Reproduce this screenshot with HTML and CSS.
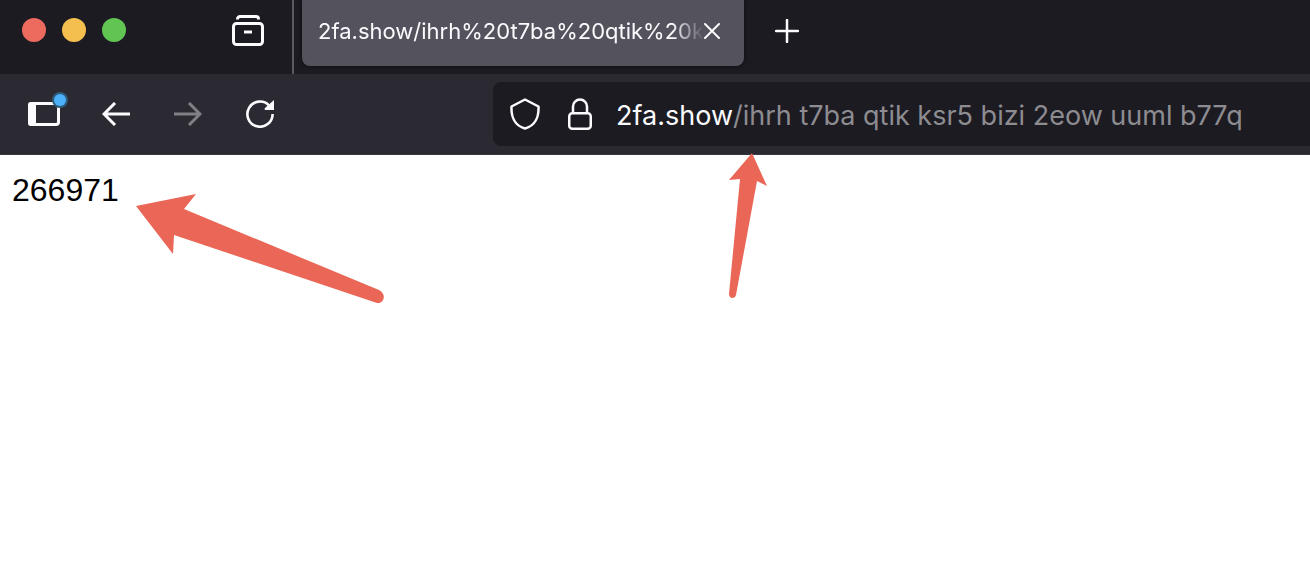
FILE: index.html
```html
<!DOCTYPE html>
<html lang="en">
<head>
    <meta charset="UTF-8">
    <meta name="viewport" content="width=device-width, initial-scale=1.0">
    <title>2fa.show</title>
    <link rel="stylesheet" href="styles.css">
</head>
<body>
    <header class="tab-strip">
        <div class="window-buttons">
            <button class="dot dot-close" aria-label="Close window"></button>
            <button class="dot dot-min" aria-label="Minimize window"></button>
            <button class="dot dot-max" aria-label="Zoom window"></button>
        </div>
        <button class="icon-btn recent-btn" aria-label="Recent browsing">
            <svg width="32" height="32" viewBox="0 0 32 32" fill="none" stroke="#fbfbfe" stroke-width="3">
                <path d="M5.500 4.500V4a2.500 2.500 0 0 1 2.500-2.500h16A2.500 2.500 0 0 1 26.500 4v.5"/>
                <rect x="1.500" y="8.500" width="29" height="21" rx="3"/>
                <path d="M12 17h8"/>
            </svg>
        </button>
        <div class="tab">
            <span class="tab-title">2fa.show/ihrh%20t7ba%20qtik%20k</span>
            <button class="icon-btn tab-close" aria-label="Close tab">
                <svg width="16" height="16" viewBox="0 0 16 16" stroke="#fbfbfe" stroke-width="2" stroke-linecap="round">
                    <path d="M1 1l14 14M15 1L1 15"/>
                </svg>
            </button>
        </div>
        <button class="icon-btn new-tab" aria-label="New tab">
            <svg width="24" height="24" viewBox="0 0 24 24" stroke="#fbfbfe" stroke-width="2.500" stroke-linecap="round">
                <path d="M12 1v22M1 12h22"/>
            </svg>
        </button>
    </header>

    <nav class="toolbar">
        <div class="nav-buttons">
            <button class="icon-btn sidebar-btn" aria-label="Sidebar">
                <svg width="32" height="24" viewBox="0 0 32 24">
                    <rect x="1.500" y="1.500" width="29" height="21" rx="2.500" fill="none" stroke="#fbfbfe" stroke-width="3"/>
                    <path d="M3 0h5v24H3a3 3 0 0 1-3-3V3a3 3 0 0 1 3-3z" fill="#fbfbfe"/>
                </svg>
                <span class="badge"></span>
            </button>
            <button class="icon-btn" aria-label="Back">
                <svg width="28" height="24" viewBox="0 0 28 24" fill="none" stroke="#fbfbfe" stroke-width="3">
                    <path d="M28 12H2M13 1L2 12l11 11"/>
                </svg>
            </button>
            <button class="icon-btn" aria-label="Forward" disabled>
                <svg width="28" height="24" viewBox="0 0 28 24" fill="none" stroke="#807f86" stroke-width="3">
                    <path d="M0 12h26M15 1l11 11-11 11"/>
                </svg>
            </button>
            <button class="icon-btn" aria-label="Reload">
                <svg width="28" height="28" viewBox="0 0 28 28">
                    <path d="M23 5.300A12.600 12.600 0 1 0 26.600 14" fill="none" stroke="#fbfbfe" stroke-width="2.600"/>
                    <path d="M28 0v10h-9q-1-1 0-2z" fill="#fbfbfe"/>
                </svg>
            </button>
        </div>
        <div class="url-bar">
            <svg width="30" height="32" viewBox="0 0 30 32" fill="none" stroke="#fbfbfe" stroke-width="2.500" stroke-linejoin="round">
                <path d="M15 1.500L28.500 8.500C29 19 25 28 15 30.500 5 28 1 19 1.500 8.500z"/>
            </svg>
            <svg width="24" height="32" viewBox="0 0 24 32" fill="none" stroke="#fbfbfe" stroke-width="2.500">
                <rect x="1.250" y="15.250" width="21.500" height="15.500" rx="3"/>
                <path d="M5 15V8.500a7 7 0 0 1 14 0V15"/>
            </svg>
            <div class="address">
                <label for="url">2fa.show</label>
                <input type="text" id="url" value="/ihrh t7ba qtik ksr5 bizi 2eow uuml b77q" spellcheck="false">
            </div>
        </div>
    </nav>

    <main class="page">
        <p class="code">266971</p>
        <svg class="arrow arrow-code" width="250" height="112" viewBox="0 0 250 112" fill="#ea6656">
            <path d="M0 12L60 0 48 15 243 96C251 100 248 110 241 109L38 41 37 60z"/>
        </svg>
        <svg class="arrow arrow-url" width="40" height="146" viewBox="0 0 40 146" fill="#ea6656">
            <path d="M24 0L39 33 29 28 8 142C7 146 1 146 1 141L12 26 1 27z"/>
        </svg>
    </main>
</body>
</html>
```
FILE: styles.css
```css
* {
    box-sizing: border-box;
}
body {
    display: flex;
    flex-direction: column;
    min-height: 100vh;
    margin: 0;
    background-color: #fff;
    font-family: Inter, sans-serif;
}
button {
    padding: 0;
    border: none;
    background: none;
}
svg {
    display: block;
    flex-shrink: 0;
}
.tab-strip {
    display: flex;
    height: 74px;
    background-color: #1c1b22;
    overflow: hidden;
}
.window-buttons {
    display: flex;
    gap: 16px;
    padding: 18px 0 0 22px;
}
.dot {
    width: 24px;
    height: 24px;
    border-radius: 50%;
}
.dot-close {
    background-color: #ed6a5e;
}
.dot-min {
    background-color: #f5bf4f;
}
.dot-max {
    background-color: #61c554;
}
.icon-btn {
    display: flex;
    align-items: center;
    justify-content: center;
    flex-shrink: 0;
}
.recent-btn {
    justify-content: flex-end;
    width: 168px;
    height: 74px;
    padding: 0 28px 12px 0;
    margin-right: 8px;
    border-right: 2px solid #5b5a61;
}
.tab {
    display: flex;
    align-items: center;
    width: 442px;
    height: 66px;
    padding: 0 24px 4px 16px;
    border-radius: 0 0 8px 8px;
    background-color: #54525d;
    box-shadow: 0 0 4px rgba(0, 0, 0, 0.6);
}
.tab-title {
    flex: 1;
    min-width: 0;
    overflow: hidden;
    white-space: nowrap;
    color: #fbfbfe;
    font-size: 22px;
    line-height: 32px;
    -webkit-mask-image: linear-gradient(to left, transparent, #000 32px);
    mask-image: linear-gradient(to left, transparent, #000 32px);
}
.new-tab {
    width: 86px;
    height: 62px;
}
.toolbar {
    display: flex;
    height: 81px;
    padding: 8px 0;
    background-color: #2b2a33;
    border-bottom: 1px solid #39383f;
}
.nav-buttons {
    display: flex;
    flex-shrink: 0;
    width: 493px;
    padding-left: 8px;
}
.nav-buttons .icon-btn {
    position: relative;
    width: 72px;
    height: 64px;
}
.badge {
    position: absolute;
    top: 12px;
    right: 14px;
    width: 12px;
    height: 12px;
    border-radius: 50%;
    background-color: #4cb1f9;
    box-shadow: 0 0 0 2px #2c5c78;
}
.url-bar {
    display: flex;
    align-items: center;
    flex: 1;
    gap: 28px;
    height: 64px;
    padding-left: 17px;
    border-radius: 8px 0 0 8px;
    background-color: #1c1b22;
}
.address {
    display: flex;
    flex: 1;
    margin-left: -4px;
    padding-top: 4px;
    color: #fbfbfe;
    font-size: 27px;
    line-height: 36px;
}
.address input {
    flex: 1;
    min-width: 0;
    padding: 0;
    border: none;
    outline: none;
    background: none;
    color: #8d8c91;
    font: inherit;
}
.page {
    position: relative;
    flex: 1;
    padding: 16px 12px;
}
.code {
    margin: 0;
    color: #000;
    font-family: "Liberation Sans", Arial, sans-serif;
    font-size: 32px;
    line-height: 38px;
}
/* Arrows lie over the page and the toolbar edge */
.arrow {
    position: absolute;
}
.arrow-code {
    top: 39px;
    left: 136px;
}
.arrow-url {
    top: -2px;
    left: 728px;
}
```
